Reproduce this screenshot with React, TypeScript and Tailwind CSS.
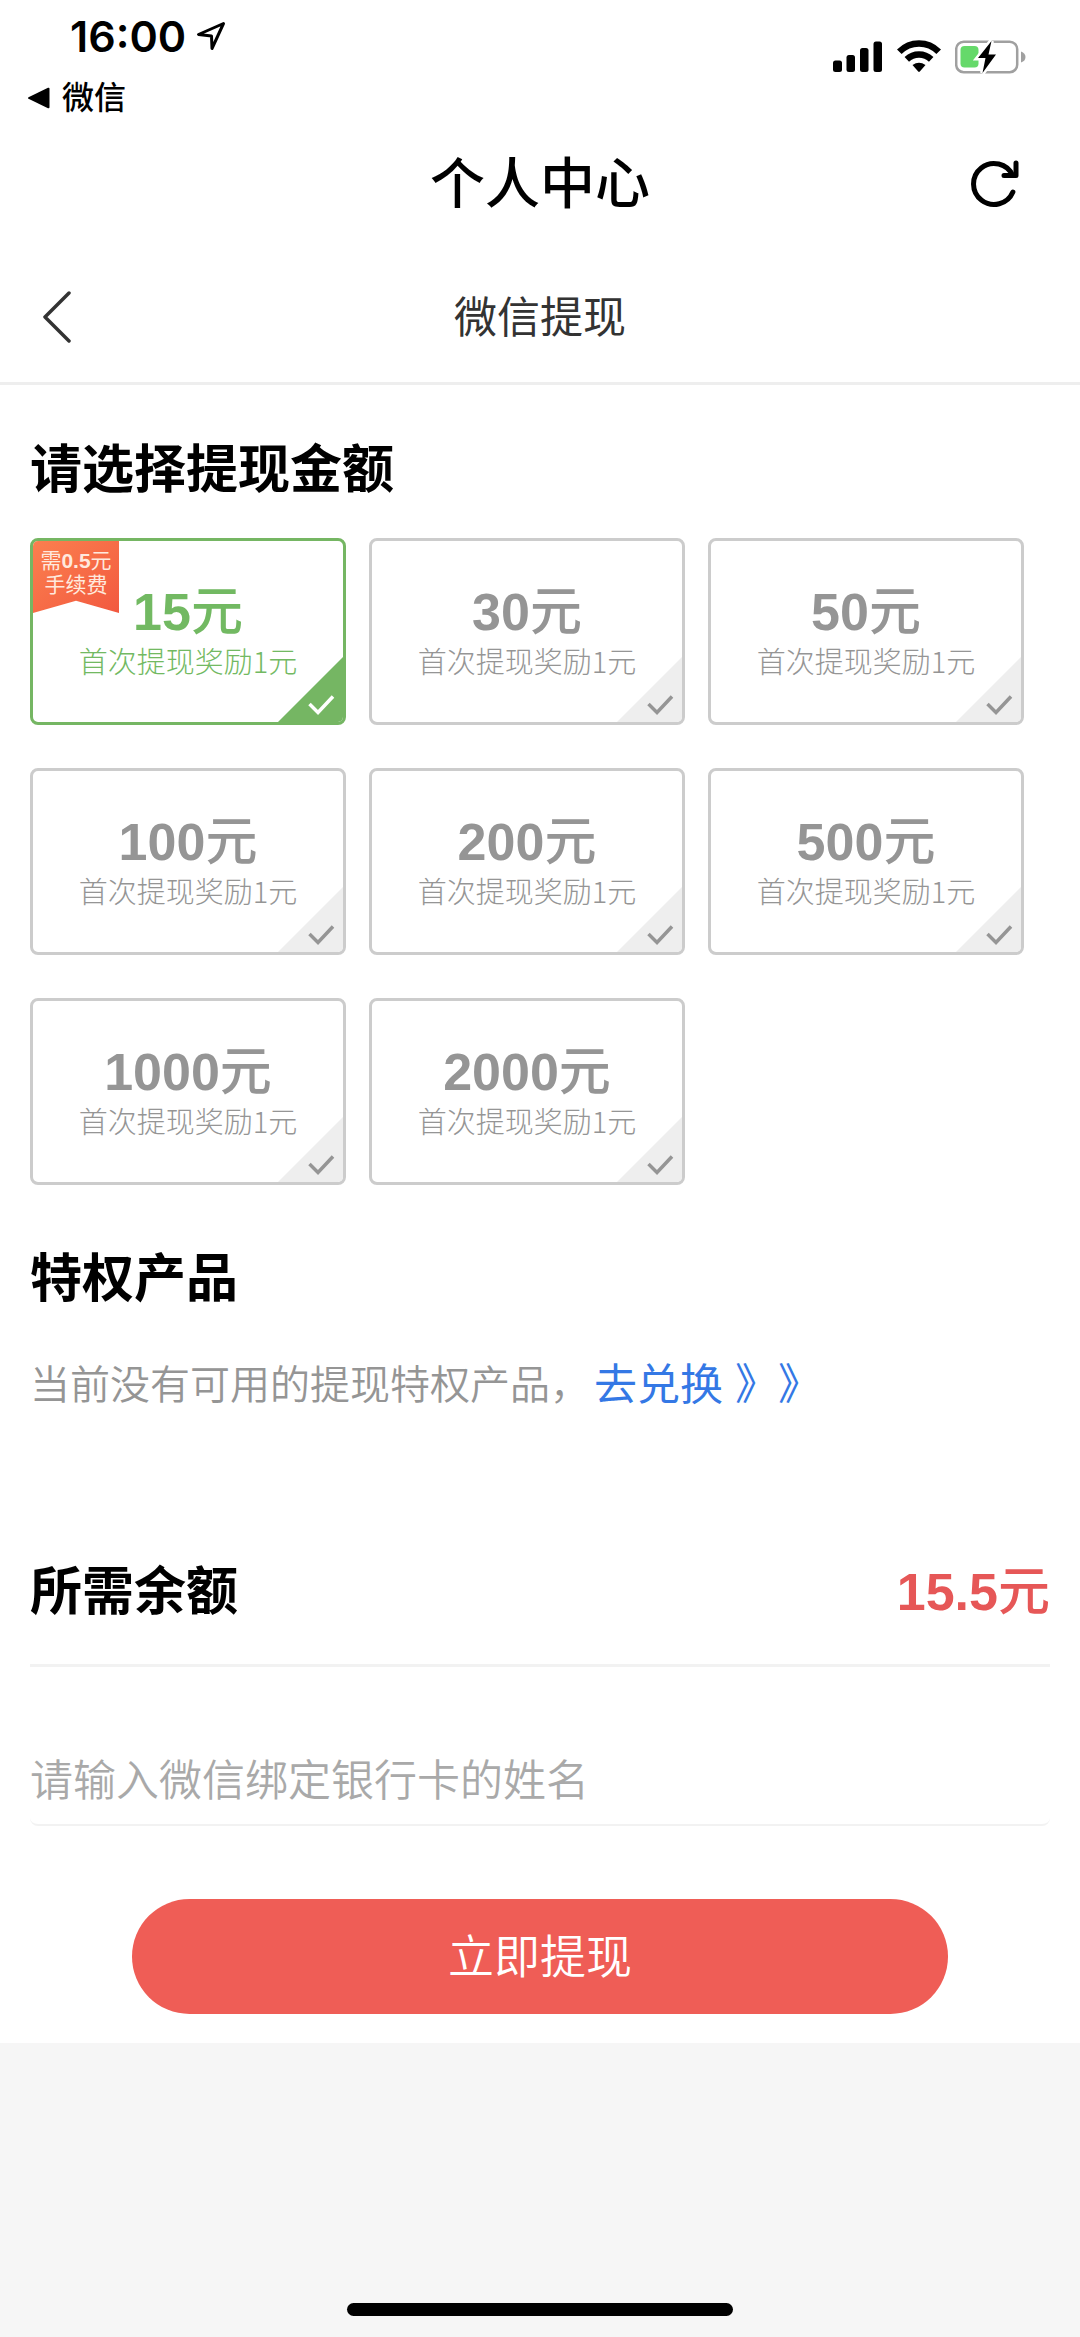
import React, { useState } from 'react';

const amounts = [
  { value: 15, fee: 0.5 },
  { value: 30, fee: 0 },
  { value: 50, fee: 0 },
  { value: 100, fee: 0 },
  { value: 200, fee: 0 },
  { value: 500, fee: 0 },
  { value: 1000, fee: 0 },
  { value: 2000, fee: 0 },
];

const StatusBar: React.FC = () => (
  <div className="flex items-start justify-between pt-3 pl-7 pr-[54px]">
    <div>
      <div className="flex h-12 items-center gap-2.5 pl-[42px]">
        <span className="font-[Inter] text-[43px] leading-none font-semibold">16:00</span>
        <svg width="30" height="30" viewBox="0 0 30 30" fill="none" stroke="currentColor" strokeWidth="3" strokeLinejoin="round">
          <path d="M27.500 2.500L2.500 13.500L15.500 15L16 27.500Z" />
        </svg>
      </div>
      <a href="#wechat" className="mt-[18px] flex h-10 items-center gap-3 text-[32px] leading-none font-medium">
        <svg width="22" height="22" viewBox="0 0 22 22" fill="currentColor">
          <path d="M0.500 10.200L20 0.800Q21.500 0.300 21.500 1.800V20.200Q21.500 21.700 20 21.200L0.500 11.800Q-0.500 11 0.500 10.200Z" />
        </svg>
        微信
      </a>
    </div>

    <div className="mt-[28px] flex items-center gap-[14px]">
      {/* signal */}
      <svg width="50" height="34" viewBox="0 0 50 34" fill="currentColor">
        <rect x="0" y="20.500" width="9" height="11.500" rx="2.500" />
        <rect x="13.500" y="15" width="8.500" height="17" rx="2.500" />
        <rect x="27" y="8" width="8.500" height="24" rx="2.500" />
        <rect x="40.500" y="1.500" width="8.500" height="30.500" rx="2.500" />
      </svg>
      {/* wifi */}
      <svg width="44" height="34" viewBox="0 0 44 34">
        <g fill="none" stroke="currentColor" strokeWidth="6.500">
          <path d="M2.300 11.700Q10.500 3.400 22 3.400T41.700 11.700" />
          <path d="M9.800 19.300Q15 14.400 22 14.400T34.200 19.300" />
        </g>
        <path d="M15.500 25Q22 20.500 28.500 25L22.800 31.600Q22 32.400 21.200 31.600Z" fill="currentColor" />
      </svg>
      {/* battery */}
      <svg width="71" height="34" viewBox="0 0 71 34">
        <rect x="1.200" y="1.700" width="61" height="30.500" rx="7.500" fill="none" stroke="#a0a0a0" strokeWidth="2.500" />
        <path d="M66 11.500Q70.500 13 70.500 17T66 22.500Z" fill="#a0a0a0" />
        <rect x="5.500" y="6" width="18" height="21.500" rx="4" fill="#65d96a" />
        <path d="M36.500 1L23 18H30.500L27.500 33L41 14.500H33.500Z" fill="#000" stroke="#fff" strokeWidth="5" paintOrder="stroke" />
      </svg>
    </div>
  </div>
);

const AmountCard: React.FC<{
  value: number;
  fee: number;
  checked: boolean;
  onSelect: () => void;
}> = ({ value, fee, checked, onSelect }) => (
  <label
    className={`relative flex h-[187px] cursor-pointer flex-col items-center overflow-hidden rounded-lg border-[3px] pt-[39px] ${
      checked ? 'border-[#75b663] text-[#72b962]' : 'border-[#cccccc] text-[#959595]'
    }`}
  >
    <input type="radio" name="amount" className="sr-only" checked={checked} onChange={onSelect} />
    <span className="text-[52px] leading-[64px] font-bold">
      {value}
      <span className="font-medium">元</span>
    </span>
    <span className="font-['Noto_Sans_CJK_SC',sans-serif] text-[29px] leading-8 font-light">首次提现奖励1元</span>

    {fee > 0 && (
      <span className="absolute top-0 left-0 h-[72px] w-[86px] bg-gradient-to-br from-[#fb7f4f] to-[#f2583f] pt-2 text-center text-[21px] leading-6 text-[#ffe9dd] [clip-path:polygon(0_0,100%_0,100%_100%,50%_83%,0_100%)]">
        需<b>{fee}</b>元
        <br />
        手续费
      </span>
    )}

    <svg
      className={`absolute right-0 bottom-0 ${checked ? 'text-[#75b663]' : 'text-[#eeeeee]'}`}
      width="65"
      height="65"
      viewBox="0 0 65 65"
    >
      <path d="M65 0V65H0Z" fill="currentColor" />
      <path
        d="M31.500 47L40 55.500L55 39.500"
        fill="none"
        stroke={checked ? '#ffffff' : '#959595'}
        strokeWidth="3.500"
      />
    </svg>
  </label>
);

const App: React.FC = () => {
  const [selected, setSelected] = useState(15);
  const [name, setName] = useState('');
  const current = amounts.find((a) => a.value === selected) ?? amounts[0];

  return (
    <div className="flex min-h-screen flex-col bg-[#f6f6f6] font-['Liberation_Sans','Noto_Sans_CJK_SC',sans-serif] text-black">
      <div className="bg-white">
        <StatusBar />

        <div className="grid h-[132px] grid-cols-[1fr_auto_1fr] items-center px-[58px]">
          <h1 className="col-start-2 text-[55px] leading-none font-medium">个人中心</h1>
          <button type="button" aria-label="刷新" className="justify-self-end">
            <svg width="52" height="50" viewBox="0 0 52 50" fill="none" stroke="currentColor" strokeWidth="5" strokeLinecap="round" strokeLinejoin="round">
              <path d="M42.900 33A20.500 20.500 0 1 1 42.700 16.500" />
              <path d="M46 4V16.500H34" />
            </svg>
          </button>
        </div>

        <div className="grid h-[135px] grid-cols-[1fr_auto_1fr] items-center border-b-[3px] border-[#eeeeee] px-10 pt-1 text-[#333333]">
          <button type="button" aria-label="返回">
            <svg width="34" height="54" viewBox="0 0 34 54" fill="none" stroke="currentColor" strokeWidth="3.500" strokeLinecap="round" strokeLinejoin="round">
              <path d="M29 2L5 26L29 50" />
            </svg>
          </button>
          <h2 className="text-[43px] leading-none">微信提现</h2>
        </div>

        <main className="px-[30px] pt-[53px] pb-[29px]">
          <h3 className="text-[52px] leading-[64px] font-bold">请选择提现金额</h3>
          <div className="mt-9 grid grid-cols-3 gap-x-[23px] gap-y-[43px] pr-[26px]">
            {amounts.map((a) => (
              <AmountCard
                key={a.value}
                value={a.value}
                fee={a.fee}
                checked={a.value === selected}
                onSelect={() => setSelected(a.value)}
              />
            ))}
          </div>

          <h3 className="mt-[62px] text-[52px] leading-[64px] font-bold">特权产品</h3>
          <p className="mt-11 flex items-center gap-1 text-[40px] leading-[60px] font-[350] text-[#959595]">
            当前没有可用的提现特权产品，
            <a href="#exchange" className="text-[43px] font-normal text-[#3478e5] [text-spacing-trim:space-all]">
              去兑换 》》
            </a>
          </p>

          <div className="mt-[145px] flex items-center justify-between border-b-[3px] border-[#f2f2f2] pb-10 text-[52px] leading-[64px] font-bold">
            <h3>所需余额</h3>
            <span className="text-[#e65757]">
              {current.value + current.fee}
              <span className="font-medium">元</span>
            </span>
          </div>

          <input
            type="text"
            aria-label="姓名"
            value={name}
            onChange={(e) => setName(e.target.value)}
            placeholder="请输入微信绑定银行卡的姓名"
            className="mt-[83px] block h-[76px] w-full rounded-lg border-b-2 border-[#f2f2f2] pb-3 text-[43px] font-[350] outline-none placeholder:text-[#a9a9a9]"
          />

          <button
            type="button"
            className="mx-auto mt-[73px] block h-[115px] w-4/5 rounded-full bg-[#ef5d56] text-[46px] leading-none font-[350] text-white"
          >
            立即提现
          </button>
        </main>
      </div>

      <div className="mx-auto mt-auto mb-[21px] h-[13px] w-[386px] rounded-full bg-black" />
    </div>
  );
};

export default App;
